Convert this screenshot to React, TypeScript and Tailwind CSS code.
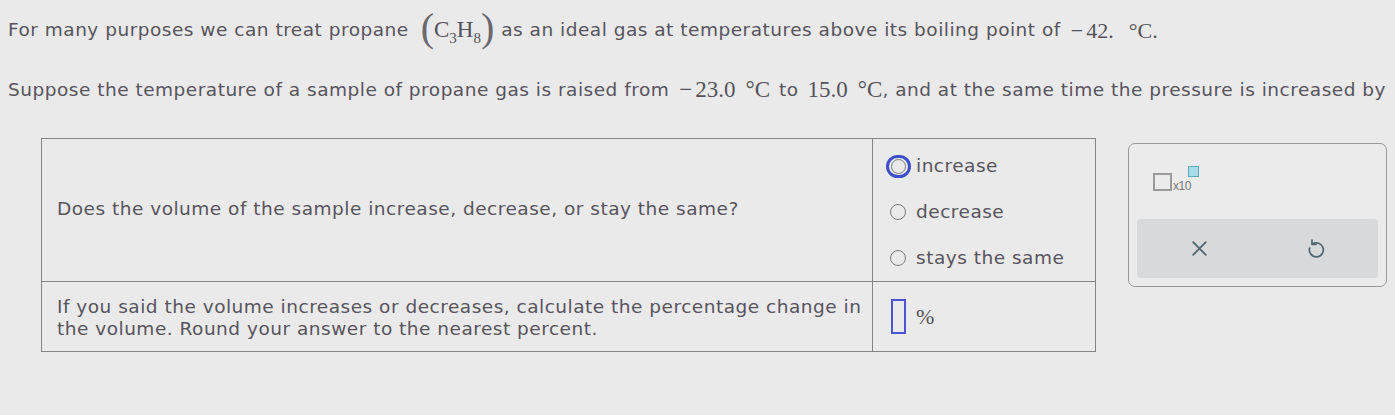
import React from "react";

const sans = { fontFamily: '"DejaVu Sans", Verdana, sans-serif', letterSpacing: "0.5px" };
const serif = { fontFamily: '"Liberation Serif", "Times New Roman", serif', letterSpacing: "0px" };

function Radio({ label, focused }: { label: string; focused?: boolean }) {
  return (
    <div className="flex items-center h-[48px]">
      <div className="w-[26px] flex justify-center">
        {focused ? (
          <div className="w-[25px] h-[23px] rounded-full border-[3px] border-[#3d4fc9] flex items-center justify-center">
            <div className="w-[15px] h-[15px] rounded-full border-[1.5px] border-[#7a7a7a]" />
          </div>
        ) : (
          <div className="w-[16px] h-[16px] rounded-full border-[1.5px] border-[#7a7a7a]" />
        )}
      </div>
      <span className="ml-[5px]">{label}</span>
    </div>
  );
}

export default function App() {
  return (
    <div
      className="w-[1395px] h-[415px] bg-[#eaeaea] text-[#57545d] text-[18.5px] overflow-hidden"
      style={sans}
    >
      <div className="pl-[8px] pt-[10px] flex items-center h-[50px] whitespace-nowrap">
        <span>For many purposes we can treat propane</span>
        <span className="flex items-center text-[#55535a] ml-[12px] h-[40px]" style={serif}>
          <span className="text-[40px] leading-none mt-[-4px] text-[#6a686f]">(</span>
          <span className="text-[23px] mt-[1px]">C</span>
          <span className="text-[15px] mt-[16px]">3</span>
          <span className="text-[23px] mt-[1px]">H</span>
          <span className="text-[15px] mt-[16px]">8</span>
          <span className="text-[40px] leading-none mt-[-4px] text-[#6a686f]">)</span>
        </span>
        <span className="ml-[7px]">as an ideal gas at temperatures above its boiling point of</span>
        <span className="text-[22px] text-[#55535a] flex" style={serif}>
          <span className="ml-[10px]">−</span>
          <span className="ml-[3px]">42.</span>
          <span className="ml-[15px]">°C.</span>
        </span>
      </div>
      <div className="pl-[8px] mt-[22px] flex items-center h-[36px] whitespace-nowrap">
        <span>Suppose the temperature of a sample of propane gas is raised from</span>
        <span className="text-[23px] text-[#55535a] flex" style={serif}>
          <span className="ml-[10px]">−</span>
          <span className="ml-[3px]">23.0</span>
          <span className="ml-[10px]">°C</span>
        </span>
        <span className="ml-[9px]">to</span>
        <span className="text-[23px] text-[#55535a] flex ml-[9px]" style={serif}>
          <span>15.0</span>
          <span className="ml-[10px]">°C</span>
        </span>
        <span>, and at the same time the pressure is increased by</span>
      </div>

      <div className="flex items-start mt-[30px]">
        <div className="ml-[41px] grid grid-cols-[831px_223px] border-[1.5px] border-[#858585] w-[1055px]">
          <div className="h-[143px] border-r-[1.5px] border-b-[1.5px] border-[#858585] flex items-center pl-[15px] pb-[2px]">
            Does the volume of the sample increase, decrease, or stay the same?
          </div>
          <div className="h-[143px] border-b-[1.5px] border-[#858585] pl-[12px] pt-[4px] flex flex-col">
            <Radio label="increase" focused />
            <Radio label="decrease" />
            <Radio label="stays the same" />
          </div>
          <div className="h-[69px] border-r-[1.5px] border-[#858585] pl-[15px] pt-[14px] leading-[22px]">
            If you said the volume increases or decreases, calculate the percentage change in
            <br />
            the volume. Round your answer to the nearest percent.
          </div>
          <div className="h-[69px] pl-[18px] flex items-center gap-[10px]">
            <div className="w-[15px] h-[35px] border-[2px] border-[#4b55d4]" />
            <span className="text-[22px] text-[#55535a]" style={serif}>%</span>
          </div>
        </div>

        <div className="ml-[32px] mt-[5px] w-[259px] h-[144px] rounded-[7px] border-[1.5px] border-[#999] bg-[#ebebeb] px-[8px] pt-[22px] flex flex-col">
          <div className="flex items-start pl-[16px] h-[53px]">
            <div className="mt-[7px] w-[19px] h-[18px] border-[2px] border-[#9a9a9a]" />
            <span
              className="mt-[14px] ml-[1px] text-[12px] leading-none text-[#777]"
              style={{ fontFamily: '"Liberation Sans", Arial, sans-serif', letterSpacing: "-0.5px" }}
            >
              x10
            </span>
            <div className="w-[11px] h-[11px] border-[1.5px] border-[#5fa8ba] bg-[#a9dcea] ml-[-3px]" />
          </div>
          <div className="h-[59px] rounded-[4px] bg-[#d7d9da] flex items-center">
            <div className="w-1/2 flex justify-center pl-[4px]">
              <svg width="19" height="19" viewBox="0 0 18 18" fill="none" stroke="#4f6670" strokeWidth="1.7" strokeLinecap="round">
                <path d="M3 3 L15 15 M15 3 L3 15" />
              </svg>
            </div>
            <div className="w-1/2 flex justify-center pr-[4px]">
              <svg width="20" height="22" viewBox="0 0 20 22" fill="none" stroke="#4f6670" strokeWidth="1.7" strokeLinecap="round" strokeLinejoin="round">
                <path d="M6.5 6 A7 7 0 1 1 3.6 10" />
                <path d="M6 2 L6 6.3 L10 6.3" />
              </svg>
            </div>
          </div>
        </div>
      </div>
    </div>
  );
}
